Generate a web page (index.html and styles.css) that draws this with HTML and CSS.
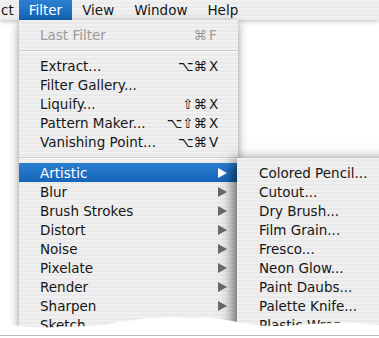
FILE: index.html
```html
<!DOCTYPE html>
<html>
<head>
<meta charset="utf-8">
<link rel="stylesheet" href="styles.css">
</head>
<body>
<div class="screen">
  <div class="menubar">
    <span class="mb-item mb-cut">ct</span>
    <span class="mb-item mb-active">Filter</span>
    <span class="mb-item">View</span>
    <span class="mb-item">Window</span>
    <span class="mb-item">Help</span>
  </div>

  <div class="menu filter-menu">
    <div class="item disabled"><span class="label">Last Filter</span><span class="sc"><span class="mods">⌘</span><span class="key">F</span></span></div>
    <div class="sep"></div>
    <div class="item"><span class="label">Extract...</span><span class="sc"><span class="mods">⌥⌘</span><span class="key">X</span></span></div>
    <div class="item"><span class="label">Filter Gallery...</span></div>
    <div class="item"><span class="label">Liquify...</span><span class="sc"><span class="mods">⇧⌘</span><span class="key">X</span></span></div>
    <div class="item"><span class="label">Pattern Maker...</span><span class="sc"><span class="mods">⌥⇧⌘</span><span class="key">X</span></span></div>
    <div class="item"><span class="label">Vanishing Point...</span><span class="sc"><span class="mods">⌥⌘</span><span class="key">V</span></span></div>
    <div class="sep sep2"></div>
    <div class="item sub selected"><span class="label">Artistic</span><svg class="arrow" viewBox="0 0 9 10"><polygon points="0,0 9,5 0,10"/></svg></div>
    <div class="item sub"><span class="label">Blur</span><svg class="arrow" viewBox="0 0 9 10"><polygon points="0,0 9,5 0,10"/></svg></div>
    <div class="item sub"><span class="label">Brush Strokes</span><svg class="arrow" viewBox="0 0 9 10"><polygon points="0,0 9,5 0,10"/></svg></div>
    <div class="item sub"><span class="label">Distort</span><svg class="arrow" viewBox="0 0 9 10"><polygon points="0,0 9,5 0,10"/></svg></div>
    <div class="item sub"><span class="label">Noise</span><svg class="arrow" viewBox="0 0 9 10"><polygon points="0,0 9,5 0,10"/></svg></div>
    <div class="item sub"><span class="label">Pixelate</span><svg class="arrow" viewBox="0 0 9 10"><polygon points="0,0 9,5 0,10"/></svg></div>
    <div class="item sub"><span class="label">Render</span><svg class="arrow" viewBox="0 0 9 10"><polygon points="0,0 9,5 0,10"/></svg></div>
    <div class="item sub"><span class="label">Sharpen</span><svg class="arrow" viewBox="0 0 9 10"><polygon points="0,0 9,5 0,10"/></svg></div>
    <div class="item sub"><span class="label">Sketch</span><svg class="arrow" viewBox="0 0 9 10"><polygon points="0,0 9,5 0,10"/></svg></div>
  </div>

  <div class="menu submenu">
    <div class="item"><span class="label">Colored Pencil...</span></div>
    <div class="item"><span class="label">Cutout...</span></div>
    <div class="item"><span class="label">Dry Brush...</span></div>
    <div class="item"><span class="label">Film Grain...</span></div>
    <div class="item"><span class="label">Fresco...</span></div>
    <div class="item"><span class="label">Neon Glow...</span></div>
    <div class="item"><span class="label">Paint Daubs...</span></div>
    <div class="item"><span class="label">Palette Knife...</span></div>
    <div class="item"><span class="label">Plastic Wrap...</span></div>
  </div>

  <svg class="torn" viewBox="0 0 379 26" preserveAspectRatio="none">
    <polygon class="paper" points="0,8 6,9 12,11 20,12 30,13 45,13.5 60,13 75,12.5 90,12 105,11 118,8 128,7 140,5 152,4 165,3.5 180,3.5 195,4 208,3.5 220,5 232,7 242,9 252,10.5 262,11.5 274,12 286,12 298,11 310,10 322,9.5 334,9 346,8.5 358,9 368,10 379,11 379,26 0,26"/>
    <rect class="rule" x="0" y="21" width="379" height="1"/>
  </svg>
</div>
</body>
</html>
```

FILE: styles.css
```css
html, body {
  margin: 0;
  padding: 0;
  background: #ffffff;
}

.screen {
  position: relative;
  width: 379px;
  height: 338px;
  overflow: hidden;
  background: #ffffff;
  font-family: "DejaVu Sans", "Liberation Sans", sans-serif;
  font-size: 13.5px;
  color: #161616;
}

.menubar {
  position: relative;
  z-index: 1;
  display: flex;
  height: 20px;
  align-items: stretch;
  background: repeating-linear-gradient(to bottom, #f1f1f1 0 2px, #ebebeb 2px 4px);
  box-shadow: 0 1px 5px rgba(0, 0, 0, 0.28);
}

.mb-item {
  display: flex;
  align-items: center;
  padding: 0 10px;
  line-height: 20px;
}

.mb-cut {
  padding: 0 5px 0 0;
  margin-left: 1px;
}

.mb-active {
  background: linear-gradient(to bottom, #2a7fd0, #1565b8);
  color: #ffffff;
}

.menu {
  position: absolute;
  background: repeating-linear-gradient(to bottom, #f0f0f0 0 2px, #e9e9e9 2px 4px);
}

.filter-menu {
  z-index: 2;
  left: 19px;
  top: 20px;
  width: 219px;
  padding-top: 5px;
  box-shadow: 0 3px 9px rgba(0, 0, 0, 0.45);
}

.submenu {
  z-index: 3;
  left: 237px;
  top: 158px;
  width: 170px;
  padding-top: 5px;
  box-shadow: -4px 2px 12px rgba(0, 0, 0, 0.6);
}

.item {
  display: flex;
  align-items: center;
  height: 19px;
  padding: 0 15px 0 21px;
  white-space: nowrap;
}

.submenu .item {
  padding-left: 22px;
}

.label {
  flex: 1;
}

.sc {
  display: flex;
}

.mods {
  text-align: right;
  margin-right: 2px;
}

.key {
  width: 14px;
  text-align: left;
}

.disabled {
  color: #9b9b9b;
}

.sep {
  height: 12px;
  display: flex;
  align-items: center;
}

.sep::before {
  content: "";
  display: block;
  width: 100%;
  height: 1px;
  background: #cdcdcd;
  box-shadow: 0 1px 0 #f8f8f8;
}

.sub {
  padding-right: 11px;
}

.arrow {
  width: 9px;
  height: 10px;
  fill: #6a6a6a;
}

.selected {
  background: linear-gradient(to bottom, #2a7fd0, #1565b8);
  color: #ffffff;
}

.selected .arrow {
  fill: #ffffff;
}

.torn {
  position: absolute;
  z-index: 5;
  left: 0;
  top: 314px;
  width: 379px;
  height: 26px;
}

.paper {
  fill: #ffffff;
}

.rule {
  fill: #b9b9b9;
}
```
